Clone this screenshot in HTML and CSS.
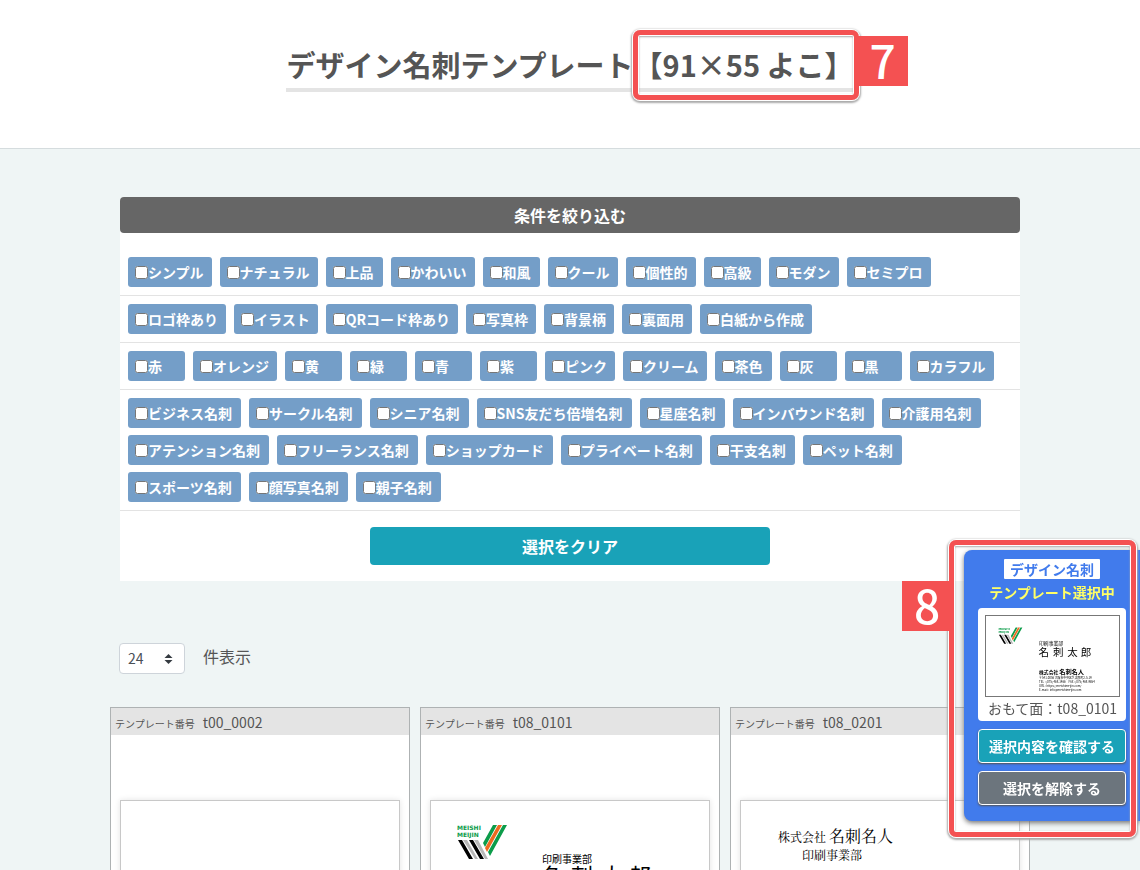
FILE: index.html
```html
<!DOCTYPE html>
<html lang="ja">
<head>
<meta charset="utf-8">
<meta name="viewport" content="width=device-width, initial-scale=1">
<title>デザイン名刺テンプレート</title>
<link rel="stylesheet" href="styles.css">
</head>
<body>
<header class="page-header">
  <h1 class="title">デザイン名刺テンプレート<span class="title-size">【91×55 よこ】<span class="callout callout-title"></span><span class="callout-number number-title">7</span></span></h1>
</header>

<main class="content">
  <form class="filter">
    <h2 class="filter-head">条件を絞り込む</h2>
    <div class="filter-row">
      <label class="chip"><input type="checkbox">シンプル</label>
      <label class="chip"><input type="checkbox">ナチュラル</label>
      <label class="chip"><input type="checkbox">上品</label>
      <label class="chip"><input type="checkbox">かわいい</label>
      <label class="chip"><input type="checkbox">和風</label>
      <label class="chip"><input type="checkbox">クール</label>
      <label class="chip"><input type="checkbox">個性的</label>
      <label class="chip"><input type="checkbox">高級</label>
      <label class="chip"><input type="checkbox">モダン</label>
      <label class="chip"><input type="checkbox">セミプロ</label>
    </div>
    <div class="filter-row">
      <label class="chip"><input type="checkbox">ロゴ枠あり</label>
      <label class="chip"><input type="checkbox">イラスト</label>
      <label class="chip"><input type="checkbox">QRコード枠あり</label>
      <label class="chip"><input type="checkbox">写真枠</label>
      <label class="chip"><input type="checkbox">背景柄</label>
      <label class="chip"><input type="checkbox">裏面用</label>
      <label class="chip"><input type="checkbox">白紙から作成</label>
    </div>
    <div class="filter-row">
      <label class="chip"><input type="checkbox">赤</label>
      <label class="chip"><input type="checkbox">オレンジ</label>
      <label class="chip"><input type="checkbox">黄</label>
      <label class="chip"><input type="checkbox">緑</label>
      <label class="chip"><input type="checkbox">青</label>
      <label class="chip"><input type="checkbox">紫</label>
      <label class="chip"><input type="checkbox">ピンク</label>
      <label class="chip"><input type="checkbox">クリーム</label>
      <label class="chip"><input type="checkbox">茶色</label>
      <label class="chip"><input type="checkbox">灰</label>
      <label class="chip"><input type="checkbox">黒</label>
      <label class="chip"><input type="checkbox">カラフル</label>
    </div>
    <div class="filter-row filter-row-wide">
      <label class="chip"><input type="checkbox">ビジネス名刺</label>
      <label class="chip"><input type="checkbox">サークル名刺</label>
      <label class="chip"><input type="checkbox">シニア名刺</label>
      <label class="chip"><input type="checkbox">SNS友だち倍増名刺</label>
      <label class="chip"><input type="checkbox">星座名刺</label>
      <label class="chip"><input type="checkbox">インバウンド名刺</label>
      <label class="chip"><input type="checkbox">介護用名刺</label>
      <label class="chip"><input type="checkbox">アテンション名刺</label>
      <label class="chip"><input type="checkbox">フリーランス名刺</label>
      <label class="chip"><input type="checkbox">ショップカード</label>
      <label class="chip"><input type="checkbox">プライベート名刺</label>
      <label class="chip"><input type="checkbox">干支名刺</label>
      <label class="chip"><input type="checkbox">ペット名刺</label>
      <label class="chip"><input type="checkbox">スポーツ名刺</label>
      <label class="chip"><input type="checkbox">顔写真名刺</label>
      <label class="chip"><input type="checkbox">親子名刺</label>
    </div>
    <div class="filter-actions">
      <button type="reset" class="clear">選択をクリア</button>
    </div>
  </form>

  <div class="count">
    <span class="select-box">
      <select id="per-page" class="select"><option>24</option></select>
      <svg class="select-arrows" viewBox="0 0 8 10" aria-hidden="true"><path fill="#343a40" d="M4 0l4 4H0zM4 10L0 6h8z"/></svg>
    </span>
    <label for="per-page">件表示</label>
  </div>

  <section class="templates">
    <article class="template">
      <h3 class="template-head"><small>テンプレート番号</small>t00_0002</h3>
      <div class="template-body"><svg class="card" viewBox="0 0 278 168"></svg></div>
    </article>
    <article class="template">
      <h3 class="template-head"><small>テンプレート番号</small>t08_0101</h3>
      <div class="template-body">
        <svg class="card" viewBox="0 0 278 168">
          <g transform="translate(26 24)">
            <path fill="#0c9c4a" d="M36 0h4L28 22l-2-4zM46 0h4L33 31l-2-4z"/>
            <path fill="#ee6a20" d="M41 0h4L30 27l-2-4z"/>
            <path fill="#000" d="M1 15h4l11 19h-4zM12 15h4l11 19h-4z"/>
            <path fill="#b8b8b8" d="M6 15h4l11 19h-3zM17 15h4l10 19h-3z"/>
            <text x="0" y="5" class="logo-text">MEISHI</text>
            <text x="0" y="12" class="logo-text">MEIJIN</text>
          </g>
          <text x="111" y="62" font-size="10">印刷事業部</text>
          <text x="110 140 170 198" y="83" font-size="22">名刺太郎</text>
        </svg>
      </div>
    </article>
    <article class="template">
      <h3 class="template-head"><small>テンプレート番号</small>t08_0201</h3>
      <div class="template-body">
        <svg class="card serif" viewBox="0 0 278 168">
          <text x="37" y="41" font-size="12">株式会社</text>
          <text x="88" y="41" font-size="16">名刺名人</text>
          <text x="61" y="59" font-size="12">印刷事業部</text>
        </svg>
      </div>
    </article>
  </section>
</main>

<aside class="selected">
  <p class="selected-tag">デザイン名刺</p>
  <p class="selected-state">テンプレート選択中</p>
  <figure class="selected-card">
    <svg class="thumb" viewBox="0 0 278 168">
      <g transform="translate(26 24)">
        <path fill="#0c9c4a" d="M36 0h4L28 22l-2-4zM46 0h4L33 31l-2-4z"/>
        <path fill="#ee6a20" d="M41 0h4L30 27l-2-4z"/>
        <path fill="#000" d="M1 15h4l11 19h-4zM12 15h4l11 19h-4z"/>
        <path fill="#b8b8b8" d="M6 15h4l11 19h-3zM17 15h4l10 19h-3z"/>
        <text x="0" y="5" class="logo-text">MEISHI</text>
        <text x="0" y="12" class="logo-text">MEIJIN</text>
      </g>
      <text x="111" y="61" font-size="10">印刷事業部</text>
      <text x="110 140 170 198" y="83" font-size="22">名刺太郎</text>
      <text x="111" y="121" font-size="10" font-weight="700">株式会社</text>
      <text x="153" y="121" font-size="13" font-weight="700">名刺名人</text>
      <text x="111" y="132" font-size="6">〒541-0056 大阪市中央区久太郎町2-5-19</text>
      <text x="111" y="140" font-size="6">TEL : (075) 468-1466　FAX : (075) 468-9654</text>
      <text x="111" y="148" font-size="6">URL : https://meishimeijin.com/</text>
      <text x="111" y="156" font-size="6">E-mail : info@meishimeijin.com</text>
    </svg>
    <figcaption>おもて面：t08_0101</figcaption>
  </figure>
  <button type="button" class="action confirm">選択内容を確認する</button>
  <button type="button" class="action release">選択を解除する</button>
  <span class="callout callout-selected"></span>
  <span class="callout-number number-selected">8</span>
</aside>
</body>
</html>
```
FILE: styles.css
```css
* { box-sizing: border-box; }

body {
  margin: 0;
  height: 100vh;
  overflow: hidden;
  background: #eff5f5;
  color: #555;
  font: 16px/24px "Noto Sans CJK JP", sans-serif;
}

h1, h2, h3, p, figure { margin: 0; }
button, select { font-family: inherit; }
.logo-text { font: 700 6px "DejaVu Sans", sans-serif; fill: #0c9c4a; }

.page-header {
  display: flex;
  justify-content: center;
  padding: 44px 16px 56px;
  background: #fff;
  border-bottom: 1px solid #d5dcde;
}
.title {
  padding-bottom: 4px;
  border-bottom: 4px solid #e4e4e4;
  font-size: 29px;
  line-height: 40px;
  font-weight: 700;
  white-space: nowrap;
}
.title-size { position: relative; display: inline-block; }

.callout {
  position: absolute;
  z-index: 1;
  border: 5px solid #f45152;
  border-radius: 7px;
  box-shadow: 0 0 0 1px #fff, 0 1px 2px 2px #aaa, inset 0 0 0 1px #fff, inset 0 1px 2px 1px #aaa;
  pointer-events: none;
}
.callout-title { inset: -14px -5px -16px -1px; }
.callout-number {
  position: absolute;
  width: 50px;
  height: 50px;
  background: #f45152;
  color: #fff;
  font-size: 46px;
  line-height: 46px;
  font-weight: 500;
  text-align: center;
  z-index: 2;
}
.number-title { top: -8px; left: calc(100% + 4px); }

.content { max-width: 932px; margin: 0 auto; padding: 48px 16px; }

.filter { background: #fff; border-radius: 4px 4px 0 0; }
.filter-head {
  margin-bottom: 16px;
  padding: 6px;
  border-radius: 4px;
  background: #666;
  color: #fff;
  font-size: 16px;
  line-height: 24px;
  font-weight: 700;
  text-align: center;
}
.filter-row {
  display: flex;
  flex-wrap: wrap;
  gap: 7px 8px;
  padding: 8px;
  border-bottom: 1px solid #e3e3e3;
}
.chip {
  display: flex;
  align-items: center;
  min-width: 57px;
  height: 30px;
  padding: 0 8px 0 7px;
  border-radius: 3px;
  background: #749ec8;
  color: #fff;
  font-size: 14px;
  font-weight: 700;
}
.filter-row-wide .chip { padding-right: 9px; }
.chip input { width: 13px; height: 13px; margin: 0; }
.filter-actions { display: flex; justify-content: center; padding: 16px; }
.clear {
  width: 400px;
  max-width: 100%;
  height: 38px;
  border: 0;
  border-radius: 4px;
  background: #19a2b8;
  color: #fff;
  font-size: 16px;
  font-weight: 700;
}

.count { display: flex; align-items: flex-start; gap: 18px; margin: 62px -1px 33px; }
.count label { padding-top: 1px; }
.select-box { position: relative; display: flex; }
.select {
  appearance: none;
  width: 66px;
  height: 31px;
  padding: 0 8px 2px;
  border: 1px solid #ced4da;
  border-radius: 4px;
  background: #fff;
  color: #495057;
  font-size: 14px;
}
.select-arrows { position: absolute; right: 12px; top: 11px; width: 9px; height: 10px; }

.templates { display: grid; grid-template-columns: repeat(3, 1fr); gap: 10px; margin: 0 -10px; }
.template { border: 1px solid #aeb2b3; background: #fff; }
.template-head {
  display: flex;
  align-items: baseline;
  gap: 8px;
  height: 27px;
  padding: 2px 4px;
  background: #e4e4e4;
  font-size: 14px;
  font-weight: 400;
}
.template-head small { font-size: 10px; }
.template-body { padding: 65px 9px; }
.card { display: block; width: 100%; border: 1px solid #c8c8c8; box-shadow: 0 0 6px #e4e4e4; fill: #000; }
.serif { font-family: "Noto Serif CJK JP", "Noto Sans CJK JP", serif; }

.selected {
  position: fixed;
  right: 0;
  bottom: 49px;
  display: flex;
  flex-direction: column;
  align-items: center;
  width: 176px;
  padding: 9px 14px 16px;
  border-radius: 8px 0 0 8px;
  background: #417bec;
  box-shadow: 0 2px 5px #777;
  font-size: 14px;
}
.selected-tag { padding: 0 6px; background: #fff; border-radius: 1px; color: #417bec; line-height: 20px; font-weight: 700; }
.selected-state { margin: 1px 0 4px; color: #ff6; font-weight: 700; }
.selected-card { width: 100%; margin-bottom: 8px; padding: 7px 6px 2px 7px; border-radius: 4px; background: #fff; }
.thumb { display: block; width: 100%; border: 1px solid #777; fill: #000; }
.selected-card figcaption { line-height: 22px; text-align: center; white-space: nowrap; }
.action {
  width: 100%;
  height: 34px;
  padding: 0;
  border: 1px solid #fff;
  border-radius: 4px;
  color: #fff;
  font-size: 14px;
  font-weight: 700;
  box-shadow: 0 1px 2px #555;
}
.action + .action { margin-top: 8px; }
.confirm { background: #19a2b8; }
.release { background: #6c757d; }
.callout-selected { inset: -10px 4px -16px -15px; }
.number-selected { top: 31px; left: -62px; }
```
